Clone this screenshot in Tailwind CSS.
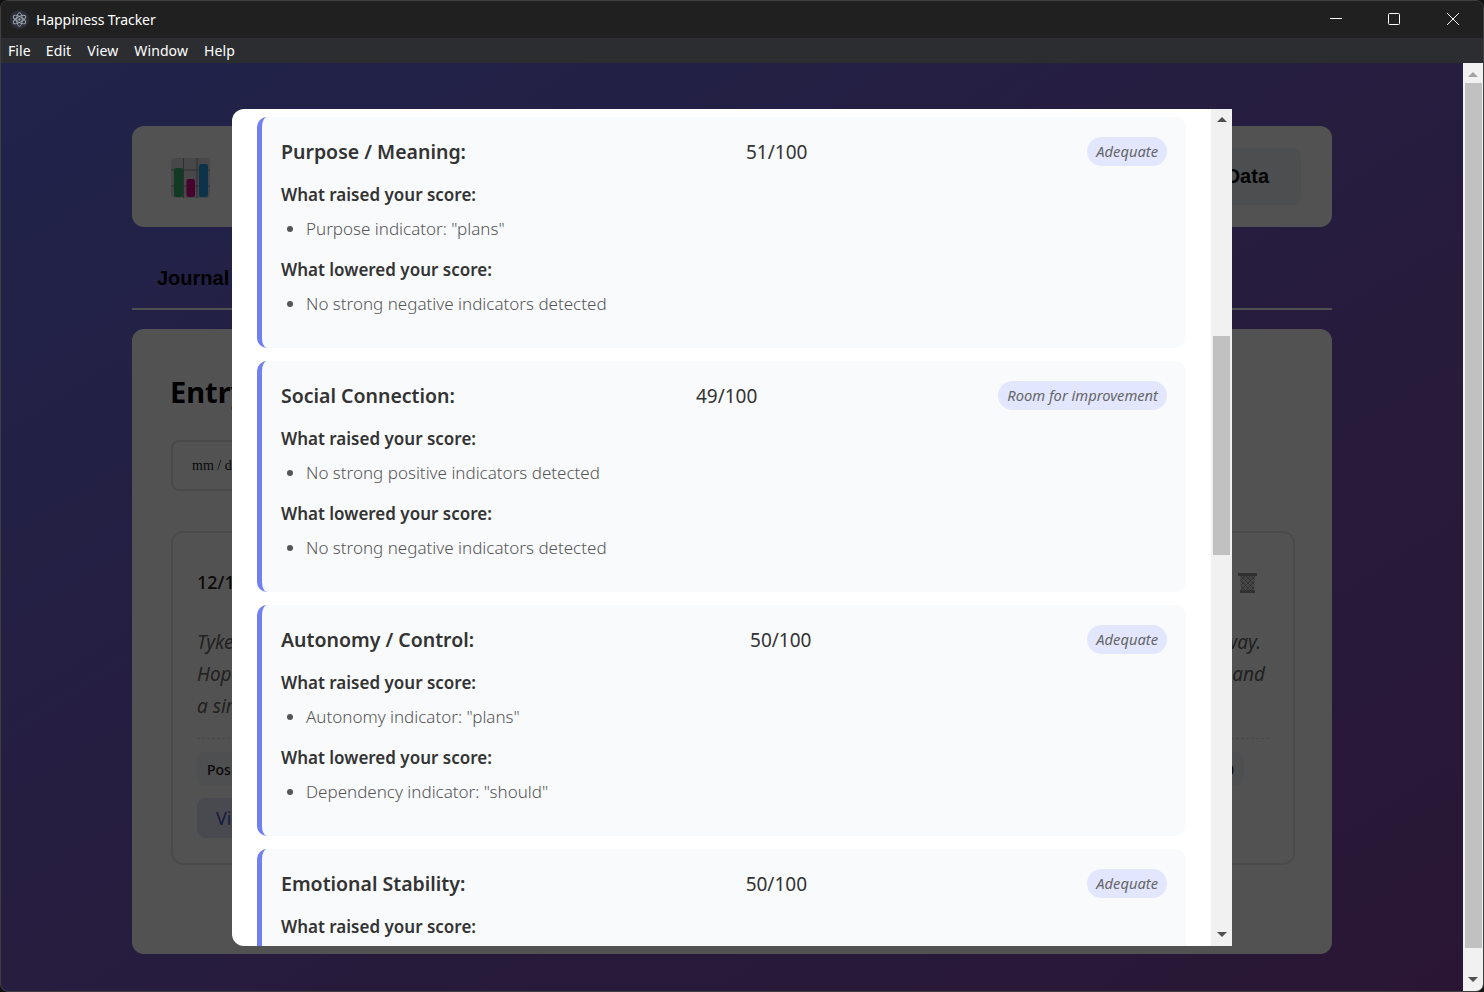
<!DOCTYPE html>
<html lang="en">
<head>
  <meta charset="UTF-8" />
  <title>Happiness Tracker</title>
  <script src="https://cdn.jsdelivr.net/npm/@tailwindcss/browser@4"></script>
</head>
<body class="bg-[#111] overflow-hidden">
  <div class="w-[1484px] h-[992px] flex flex-col overflow-hidden rounded-lg border border-[#3f3f3f] font-['Noto_Sans',sans-serif]">

    <!-- Title bar -->
    <div class="h-[37px] shrink-0 bg-[#202020] flex items-center text-white">
      <svg class="ml-[9px] w-[19px] h-[19px]" viewBox="0 0 18 18" fill="none" stroke="#a4adb3" stroke-width="0.9">
        <circle cx="9" cy="9" r="9" fill="#2c2f3b" stroke="none"/>
        <ellipse cx="9" cy="9" rx="6.5" ry="2.6" transform="rotate(30 9 9)"/>
        <ellipse cx="9" cy="9" rx="6.5" ry="2.6" transform="rotate(90 9 9)"/>
        <ellipse cx="9" cy="9" rx="6.5" ry="2.6" transform="rotate(150 9 9)"/>
        <circle cx="9" cy="9" r="1.1" fill="#a4adb3" stroke="none"/>
      </svg>
      <span class="ml-[7px] text-[14px] tracking-[-0.08px]">Happiness Tracker</span>
      <div class="ml-auto mb-[1px] flex items-center pr-[24px]">
        <svg class="w-3 h-3" viewBox="0 0 12 12" stroke="#fff" fill="none"><path d="M0 5.5h12"/></svg>
        <svg class="ml-[46px] w-3 h-3" viewBox="0 0 12 12" stroke="#fff" fill="none"><rect x="0.5" y="0.5" width="11" height="11" rx="1"/></svg>
        <svg class="ml-[47px] w-3 h-3" viewBox="0 0 12 12" stroke="#fff" fill="none"><path d="M0 0l12 12M12 0L0 12"/></svg>
      </div>
    </div>

    <!-- Menu bar -->
    <div class="h-[25px] shrink-0 bg-[#2b2d30] flex items-center pl-[7px] gap-[16px] text-[14px] tracking-[0.1px] text-white">
      <span>File</span><span class="-ml-px">Edit</span><span>View</span><span>Window</span><span>Help</span>
    </div>

    <div class="flex-1 flex min-h-0">
      <!-- Page -->
      <div class="relative flex-1 overflow-hidden bg-gradient-to-br from-[#646de7] to-[#8345a2]">
        <div class="w-[1200px] mx-auto pt-[63px] font-['Liberation_Sans',sans-serif]">

          <header class="h-[101px] bg-white rounded-xl flex items-center justify-between pl-[39px] pr-[31px]">
            <svg class="w-[39px] h-[40px] mt-[3px]" viewBox="0 0 39 40">
              <rect width="39" height="40" rx="4" fill="#dfdde3"/>
              <path d="M0 12h39M0 28h39M12.5 0v40M26 0v40" stroke="#8f8d94" stroke-width="1"/>
              <rect x="3" y="10" width="9" height="29" rx="2" fill="#3ab56c"/>
              <rect x="15.500" y="21" width="8.500" height="18" rx="2" fill="#e0088e"/>
              <rect x="28" y="6" width="9" height="33" rx="2" fill="#2aa0e6"/>
            </svg>
            <button class="h-[57px] w-[190px] mb-[1px] rounded-lg bg-[#eef2f6] text-[20px] font-bold text-[#111] text-right pr-[32px]">Clear Data</button>
          </header>

          <nav class="h-[83px] border-b-2 border-[#f4f4f4] flex items-center pl-[25px] pt-[20px]">
            <span class="text-[20px] font-bold text-black">Journal</span>
          </nav>

          <main class="mt-[19px] h-[625px] bg-white rounded-xl pt-[42px] px-[39px]">
            <h2 class="-ml-px text-[29px] leading-[42px] font-bold text-black font-['Noto_Sans',sans-serif]">Entry</h2>
            <div class="mt-[27px] w-[200px] h-[51px] border-2 border-[#e2e2e2] rounded-lg flex items-center pl-[19px] text-[14px] text-[#222] font-['Liberation_Serif',serif]">mm / dd / yyyy</div>

            <section class="mt-[40px] w-[1124px] h-[334px] border-2 border-[#e5e5e5] rounded-xl pt-[36px] px-[24px] font-['Noto_Sans',sans-serif]">
              <div class="flex items-center justify-between">
                <span class="text-[18px] font-medium text-[#222]">12/1/2025</span>
                <svg class="w-[19px] h-[20px] mr-[12px]" viewBox="0 0 19 20">
                  <defs>
                    <pattern id="mesh" width="5" height="5" patternUnits="userSpaceOnUse">
                      <path d="M0 0l5 5M5 0L0 5" stroke="#8a8a8a" stroke-width="0.8"/>
                    </pattern>
                  </defs>
                  <path d="M2 3h15l-1 15H3z" fill="#dcdcdc"/>
                  <path d="M2 3h15l-1 15H3z" fill="url(#mesh)"/>
                  <rect y="0" width="19" height="3" fill="#9a9a9a"/>
                  <rect x="2" y="17" width="15" height="3" fill="#9a9a9a"/>
                </svg>
              </div>
              <div class="mt-[30px] text-[19px] leading-[32px] italic text-[#666]">
                <div class="flex justify-between"><span>Tyke</span><span class="pr-[8px]">way.</span></div>
                <div class="flex justify-between"><span>Hope</span><span class="pr-[4px]">and</span></div>
                <div>a sim</div>
              </div>
              <div class="mt-[16px] border-t border-dashed border-[#e4e4e4]"></div>
              <div class="mt-[13px] h-[34px] w-[1047px] bg-[#f2f4f8] rounded-lg flex items-center justify-between px-[10px] text-[14px] text-[#222] font-medium">
                <span>Positive</span><span>0</span>
              </div>
              <div class="mt-[12px] h-[40px] w-[160px] bg-[#dfe5f7] rounded-lg flex items-center pl-[19px] text-[18px] text-[#4a55c0]">View</div>
            </section>
          </main>
        </div>

        <!-- Dim overlay + modal -->
        <div class="absolute inset-0 bg-black/[0.68] flex items-center justify-center">
          <div class="w-[1000px] h-[837px] bg-white rounded-l-xl flex overflow-hidden text-[#333]">
            <div class="flex-1 px-[25px] pt-2 flex flex-col gap-[13px] overflow-hidden">

              <article class="h-[231px] shrink-0 bg-[#f9fafc] border-l-[5px] border-[#7080ee] rounded-[10px] pt-[20px] pl-[19px] pr-[19px]">
                <div class="flex items-center justify-between h-[29px]">
                  <h3 class="pt-[2px] text-[19.5px] font-semibold">Purpose / Meaning:</h3>
                  <span class="pt-[2px] text-[19px]">51/100</span>
                  <span class="h-[29px] px-[9px] pt-px rounded-full bg-[#e2e7ff] flex items-center text-[14.7px] italic text-[#666]">Adequate</span>
                </div>
                <h4 class="mt-[15px] text-[17px] leading-[28px] font-semibold">What raised your score:</h4>
                <ul class="mt-[6px] list-disc pl-[25px] text-[17px] leading-[28px] font-light text-[#555]"><li>Purpose indicator: "plans"</li></ul>
                <h4 class="mt-[13px] text-[17px] leading-[28px] font-semibold">What lowered your score:</h4>
                <ul class="mt-[6px] list-disc pl-[25px] text-[17px] leading-[28px] font-light text-[#555]"><li>No strong negative indicators detected</li></ul>
              </article>

              <article class="h-[231px] shrink-0 bg-[#f9fafc] border-l-[5px] border-[#7080ee] rounded-[10px] pt-[20px] pl-[19px] pr-[19px]">
                <div class="flex items-center justify-between h-[29px]">
                  <h3 class="pt-[2px] text-[19.5px] font-semibold">Social Connection:</h3>
                  <span class="pt-[2px] text-[19px]">49/100</span>
                  <span class="h-[29px] px-[9px] pt-px rounded-full bg-[#e2e7ff] flex items-center text-[14.7px] italic text-[#666]">Room for improvement</span>
                </div>
                <h4 class="mt-[15px] text-[17px] leading-[28px] font-semibold">What raised your score:</h4>
                <ul class="mt-[6px] list-disc pl-[25px] text-[17px] leading-[28px] font-light text-[#555]"><li>No strong positive indicators detected</li></ul>
                <h4 class="mt-[13px] text-[17px] leading-[28px] font-semibold">What lowered your score:</h4>
                <ul class="mt-[6px] list-disc pl-[25px] text-[17px] leading-[28px] font-light text-[#555]"><li>No strong negative indicators detected</li></ul>
              </article>

              <article class="h-[231px] shrink-0 bg-[#f9fafc] border-l-[5px] border-[#7080ee] rounded-[10px] pt-[20px] pl-[19px] pr-[19px]">
                <div class="flex items-center justify-between h-[29px]">
                  <h3 class="pt-[2px] text-[19.5px] font-semibold">Autonomy / Control:</h3>
                  <span class="pt-[2px] text-[19px]">50/100</span>
                  <span class="h-[29px] px-[9px] pt-px rounded-full bg-[#e2e7ff] flex items-center text-[14.7px] italic text-[#666]">Adequate</span>
                </div>
                <h4 class="mt-[15px] text-[17px] leading-[28px] font-semibold">What raised your score:</h4>
                <ul class="mt-[6px] list-disc pl-[25px] text-[17px] leading-[28px] font-light text-[#555]"><li>Autonomy indicator: "plans"</li></ul>
                <h4 class="mt-[13px] text-[17px] leading-[28px] font-semibold">What lowered your score:</h4>
                <ul class="mt-[6px] list-disc pl-[25px] text-[17px] leading-[28px] font-light text-[#555]"><li>Dependency indicator: "should"</li></ul>
              </article>

              <article class="h-[231px] shrink-0 bg-[#f9fafc] border-l-[5px] border-[#7080ee] rounded-[10px] pt-[20px] pl-[19px] pr-[19px]">
                <div class="flex items-center justify-between h-[29px]">
                  <h3 class="pt-[2px] text-[19.5px] font-semibold">Emotional Stability:</h3>
                  <span class="pt-[2px] text-[19px]">50/100</span>
                  <span class="h-[29px] px-[9px] pt-px rounded-full bg-[#e2e7ff] flex items-center text-[14.7px] italic text-[#666]">Adequate</span>
                </div>
                <h4 class="mt-[15px] text-[17px] leading-[28px] font-semibold">What raised your score:</h4>
              </article>
            </div>

            <!-- Modal scrollbar -->
            <div class="w-[21px] shrink-0 bg-[#f1f1f1] flex flex-col items-center relative">
              <div class="mt-[8px] w-0 h-0 border-x-[5px] border-x-transparent border-b-[5px] border-b-[#505050]"></div>
              <div class="absolute top-[227px] left-[2px] right-[2px] h-[219px] bg-[#c1c1c1]"></div>
              <div class="mt-auto mb-[9px] w-0 h-0 border-x-[5px] border-x-transparent border-t-[5px] border-t-[#505050]"></div>
            </div>
          </div>
        </div>
      </div>

      <!-- Page scrollbar -->
      <div class="w-[20px] shrink-0 bg-[#f1f1f1] flex flex-col items-center">
        <div class="mt-[9px] w-0 h-0 border-x-[5px] border-x-transparent border-b-[5px] border-b-[#a3a3a3]"></div>
        <div class="mt-[6px] w-[17px] h-[865px] bg-[#c1c1c1]"></div>
        <div class="mt-auto mb-[9px] w-0 h-0 border-x-[5px] border-x-transparent border-t-[5px] border-t-[#505050]"></div>
      </div>
    </div>
  </div>
</body>
</html>
